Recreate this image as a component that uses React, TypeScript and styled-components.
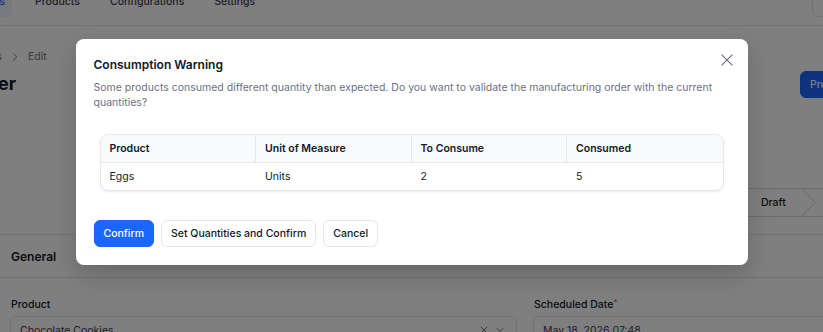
import React from 'react';
import styled, { createGlobalStyle } from 'styled-components';
import { ChevronDown, ChevronRight, X } from 'lucide-react';

const GlobalStyle = createGlobalStyle`
  * {
    box-sizing: border-box;
  }
  html,
  body {
    margin: 0;
    padding: 0;
  }
  body {
    font-family: Inter, 'Noto Sans', sans-serif;
    background: #fff;
    overflow: hidden;
    -webkit-font-smoothing: antialiased;
  }
`;

const Screen = styled.div`
  position: relative;
  width: 823px;
  height: 332px;
  overflow: hidden;
  background: #fff;
`;

const Page = styled.div`
  display: flex;
  flex-direction: column;
  margin-top: -22px;
`;

// keeps the end of a wider item, the rest is scrolled out of view on the left
const ClipStart = styled.div<{ $w: number }>`
  display: flex;
  justify-content: flex-end;
  flex-shrink: 0;
  width: ${(p) => p.$w}px;
  overflow: hidden;
  white-space: nowrap;
`;

// keeps the start of a wider item, the rest is off screen on the right
const ClipEnd = styled.div<{ $w: number }>`
  display: flex;
  justify-content: flex-start;
  flex-shrink: 0;
  width: ${(p) => p.$w}px;
  overflow: hidden;
  white-space: nowrap;
`;

const NavBar = styled.div`
  display: flex;
  align-items: center;
  justify-content: space-between;
  height: 48px;
  border-bottom: 1px solid #e5e7eb;
`;

const Tabs = styled.div`
  display: flex;
  align-items: center;
  gap: 16px;
`;

const Tab = styled.div<{ $active?: boolean }>`
  flex-shrink: 0;
  padding: 7px;
  border-radius: 6px;
  font-size: 10.5px;
  line-height: 16px;
  font-weight: 500;
  color: ${(p) => (p.$active ? '#1a66ff' : '#374151')};
  background: ${(p) => (p.$active ? '#eef3ff' : 'transparent')};
`;

const UserBox = styled.div`
  flex-shrink: 0;
  width: 32px;
  height: 30px;
  border: 1px solid #e5e7eb;
  border-radius: 6px;
`;

const Header = styled.div`
  padding-top: 23px;
`;

const Breadcrumbs = styled.div`
  display: flex;
  align-items: center;
  gap: 6px;
  font-size: 10.5px;
  line-height: 16px;
  color: #6b7280;

  svg {
    flex-shrink: 0;
  }
`;

const TitleRow = styled.div`
  display: flex;
  align-items: center;
  justify-content: space-between;
  height: 28px;
  margin-top: 5px;
`;

const PageTitle = styled.h1`
  margin: 0;
  flex-shrink: 0;
  font-size: 18px;
  line-height: 28px;
  font-weight: 700;
  color: #111827;
`;

const Button = styled.button<{ $primary?: boolean }>`
  flex-shrink: 0;
  height: 27px;
  padding: 0 9px;
  border-radius: 6px;
  border: 1px solid ${(p) => (p.$primary ? '#1a66ff' : '#e5e7eb')};
  background: ${(p) => (p.$primary ? '#1a66ff' : '#fff')};
  color: ${(p) => (p.$primary ? '#fff' : '#111827')};
  font-family: inherit;
  font-size: 10.5px;
  font-weight: 500;
  white-space: nowrap;
  cursor: pointer;
`;

const StatusRow = styled.div`
  display: flex;
  justify-content: flex-end;
  margin-top: 90px;
`;

const StatusBar = styled.div`
  display: flex;
  height: 29px;
  border-top: 1px solid #d1d5db;
  border-bottom: 1px solid #d1d5db;
`;

const Step = styled.div`
  display: flex;
  align-items: center;
  flex-shrink: 0;
  gap: 15px;
  padding-left: 13px;
  font-size: 10.5px;
  font-weight: 500;
  color: #111827;
`;

const Card = styled.div`
  margin-top: 17px;
  border-top: 1px solid #e5e7eb;
`;

const CardHeader = styled.div`
  display: flex;
  align-items: center;
  height: 43px;
  padding: 0 11px;
  border-bottom: 1px solid #e5e7eb;
  font-size: 12px;
  font-weight: 600;
  color: #111827;
`;

const CardBody = styled.div`
  display: grid;
  grid-template-columns: 507px 400px;
  column-gap: 16px;
  padding: 19px 10px;
`;

const Field = styled.div`
  display: flex;
  flex-direction: column;
  gap: 4px;
`;

const Label = styled.label`
  display: block;
  height: 15px;
  padding-left: 1px;
  font-size: 10.5px;
  line-height: 15px;
  font-weight: 500;
  color: #111827;
`;

const Required = styled.span`
  color: #ef4444;
  font-size: 8px;
  line-height: 0;
  vertical-align: 3px;
`;

const Input = styled.div`
  display: flex;
  align-items: center;
  gap: 4px;
  height: 28px;
  padding: 0 10px 0 9px;
  border: 1px solid #e5e7eb;
  border-radius: 6px;
  font-size: 10.5px;
  color: #374151;

  span {
    flex: 1;
  }
`;

const Overlay = styled.div`
  position: absolute;
  inset: 0;
  display: flex;
  justify-content: center;
  align-items: flex-start;
  padding-top: 39px;
  background: rgba(0, 0, 0, 0.5);
`;

const Modal = styled.div`
  position: relative;
  width: 672px;
  padding: 18px;
  border-radius: 8px;
  background: #fff;
  box-shadow: 0 10px 25px rgba(0, 0, 0, 0.18);
`;

const CloseButton = styled.button`
  position: absolute;
  top: 11px;
  right: 11px;
  display: flex;
  align-items: center;
  justify-content: center;
  width: 20px;
  height: 20px;
  padding: 0;
  border: none;
  background: none;
  color: #6b7280;
  cursor: pointer;
`;

const ModalTitle = styled.h2`
  margin: 0;
  font-size: 12px;
  line-height: 16px;
  font-weight: 600;
  color: #111827;
`;

const ModalText = styled.p`
  margin: 7px 0 0;
  font-size: 10.5px;
  line-height: 15px;
  color: #6b7280;
`;

const TableWrap = styled.div`
  margin: 24px 6px 0;
  border: 1px solid #e5e7eb;
  border-radius: 8px;
  overflow: hidden;
  box-shadow: 0 1px 2px rgba(0, 0, 0, 0.08);
`;

const Row = styled.div`
  display: grid;
  grid-template-columns: repeat(4, 1fr);
`;

const HeadCell = styled.div`
  display: flex;
  align-items: center;
  height: 28px;
  padding: 0 9px;
  background: #f9fafb;
  border-bottom: 1px solid #e5e7eb;
  font-size: 10.5px;
  font-weight: 600;
  color: #111827;

  &:not(:last-child) {
    border-right: 1px solid #e5e7eb;
  }
`;

const Cell = styled.div`
  display: flex;
  align-items: center;
  height: 27px;
  padding: 0 9px;
  font-size: 10.5px;
  color: #111827;
`;

const Footer = styled.div`
  display: flex;
  gap: 7px;
  margin-top: 29px;
`;

const columns = ['Product', 'Unit of Measure', 'To Consume', 'Consumed'];
const rows = [{ product: 'Eggs', uom: 'Units', toConsume: 2, consumed: 5 }];
const steps = ['Draft', 'Confirmed', 'In Progress', 'Done'];

const StepArrow = () => (
  <svg width='15' height='27' viewBox='0 0 15 27' fill='none'>
    <path d='M0.5 0L14.5 13.5L0.5 27' stroke='#d1d5db' strokeWidth='1' />
  </svg>
);

export default function App() {
  return (
    <Screen>
      <GlobalStyle />
      <Page>
        <NavBar>
          <Tabs>
            <ClipStart $w={12}>
              <Tab $active>Operations</Tab>
            </ClipStart>
            <Tab>Products</Tab>
            <Tab>Configurations</Tab>
            <Tab>Settings</Tab>
          </Tabs>
          <ClipEnd $w={11}>
            <UserBox />
          </ClipEnd>
        </NavBar>

        <Header>
          <Breadcrumbs>
            <ClipStart $w={2}>Manufacturing Orders</ClipStart>
            <ChevronRight size={14} strokeWidth={1.5} />
            <span>Edit</span>
          </Breadcrumbs>
          <TitleRow>
            <ClipStart $w={16}>
              <PageTitle>Manufacturing Order</PageTitle>
            </ClipStart>
            <ClipEnd $w={23}>
              <Button $primary>Produce</Button>
            </ClipEnd>
          </TitleRow>
        </Header>

        <StatusRow>
          <ClipEnd $w={75}>
            <StatusBar>
              {steps.map((s) => (
                <Step key={s}>
                  {s}
                  <StepArrow />
                </Step>
              ))}
            </StatusBar>
          </ClipEnd>
        </StatusRow>

        <Card>
          <CardHeader>General</CardHeader>
          <CardBody>
            <Field>
              <Label>Product</Label>
              <Input>
                <span>Chocolate Cookies</span>
                <X size={12} color='#6b7280' />
                <ChevronDown size={12} color='#6b7280' />
              </Input>
            </Field>
            <Field>
              <Label>
                Scheduled Date<Required>*</Required>
              </Label>
              <Input>
                <span>May 18, 2026 07:48</span>
              </Input>
            </Field>
          </CardBody>
        </Card>
      </Page>

      <Overlay>
        <Modal role='dialog'>
          <CloseButton aria-label='Close'>
            <svg width='12' height='12' viewBox='0 0 12 12' fill='none'>
              <path d='M0.6 0.6L11.4 11.4M11.4 0.6L0.6 11.4' stroke='currentColor' strokeWidth='1.2' />
            </svg>
          </CloseButton>
          <ModalTitle>Consumption Warning</ModalTitle>
          <ModalText>
            Some products consumed different quantity than expected. Do you want to validate the
            manufacturing order with the current quantities?
          </ModalText>
          <TableWrap>
            <Row>
              {columns.map((c) => (
                <HeadCell key={c}>{c}</HeadCell>
              ))}
            </Row>
            {rows.map((r) => (
              <Row key={r.product}>
                <Cell>{r.product}</Cell>
                <Cell>{r.uom}</Cell>
                <Cell>{r.toConsume}</Cell>
                <Cell>{r.consumed}</Cell>
              </Row>
            ))}
          </TableWrap>
          <Footer>
            <Button $primary>Confirm</Button>
            <Button>Set Quantities and Confirm</Button>
            <Button>Cancel</Button>
          </Footer>
        </Modal>
      </Overlay>
    </Screen>
  );
}
